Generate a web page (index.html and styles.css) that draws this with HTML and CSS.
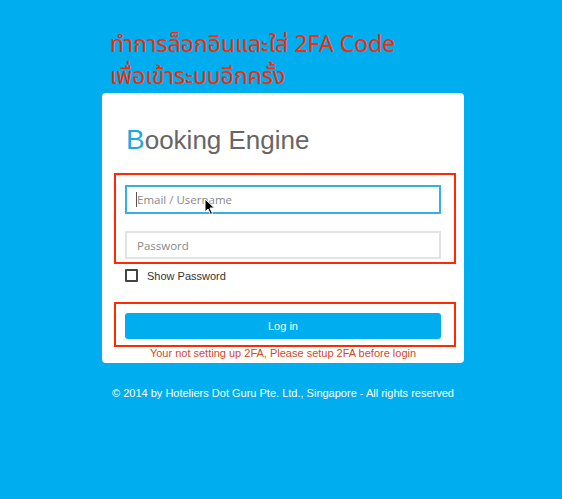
FILE: index.html
```html
<!DOCTYPE html>
<html>
<head>
    <title>Booking Engine - Login</title>
    <link rel="stylesheet" href="styles.css">
</head>
<body>
    <div class="page">
        <h2 class="note">ทำการล็อกอินและใส่ 2FA Code<br>เพื่อเข้าระบบอีกครั้ง</h2>

        <div class="login-card">
            <h1 class="brand"><span class="brand-b">B</span>ooking Engine</h1>

            <div class="field">
                <input type="text" class="input input-focus" placeholder="Email / Username">
                <span class="caret"></span>
                <svg class="pointer" width="12" height="18" viewBox="0 0 12 18">
                    <path d="M1 1 L1 14 L4 11 L6.5 16.5 L8.5 15.5 L6 10 L10.5 10 Z" fill="#000" stroke="#fff" stroke-width="1"/>
                </svg>
            </div>
            <div class="field">
                <input type="password" class="input" placeholder="Password">
            </div>

            <label class="show-pass">
                <span class="check"></span>
                Show Password
            </label>

            <button class="login-button">Log in</button>
            <p class="error">Your not setting up 2FA, Please setup 2FA before login</p>

            <!-- annotation boxes -->
            <div class="mark mark-fields"></div>
            <div class="mark mark-button"></div>
        </div>

        <footer>
            <p>&copy; 2014 by Hoteliers Dot Guru Pte. Ltd., Singapore - All rights reserved</p>
        </footer>
    </div>
</body>
</html>
```

FILE: styles.css
```css
body {
    margin: 0;
    background: #00aeef;
    font-family: "Liberation Sans", Arial, sans-serif;
    min-height: 100vh;
}

.page {
    width: 362px;
    margin: 0 auto;
    padding: 29px 0 0 4px;
}

.note {
    margin: 0 0 0 8px;
    font-family: "Noto Sans Thai", "Noto Sans", "DejaVu Sans", sans-serif;
    font-size: 23px;
    font-weight: normal;
    line-height: 32px;
    color: #ff2a00;
}

.login-card {
    position: relative;
    background: white;
    border-radius: 4px;
    padding: 31px 23px 0 23px;
    height: 239px;
}

.brand {
    margin: 0 0 29px 1px;
    font-size: 26px;
    font-weight: normal;
    line-height: 32px;
    color: #666;
}

.brand-b {
    color: #1ba9e1;
    font-size: 28px;
}

.field {
    position: relative;
    margin-bottom: 17px;
}

.input {
    display: block;
    box-sizing: border-box;
    width: 316px;
    height: 28px;
    padding: 0 10px;
    border: 2px solid #e3e3e3;
    font-family: "Open Sans", sans-serif;
    font-size: 11.5px;
    color: #555;
    outline: none;
}

.input::placeholder {
    color: #8a8a8a;
}

.input-focus {
    height: 29px;
    border-color: #36b0e4;
}

.caret {
    position: absolute;
    left: 11px;
    top: 7px;
    width: 1px;
    height: 15px;
    background: #555;
}

.pointer {
    position: absolute;
    left: 79px;
    top: 13px;
}

.show-pass {
    display: flex;
    align-items: center;
    gap: 9px;
    margin-top: -7px;
    font-size: 11px;
    color: #333;
}

.check {
    box-sizing: border-box;
    width: 13px;
    height: 13px;
    border: 2px solid #444;
    border-radius: 1px;
}

.login-button {
    display: block;
    width: 316px;
    height: 26px;
    margin-top: 31px;
    border: none;
    border-radius: 3px;
    background: #00aeef;
    color: white;
    font-family: "Liberation Sans", Arial, sans-serif;
    font-size: 11px;
    cursor: pointer;
}

.error {
    margin: 8px 0 0 0;
    text-align: center;
    font-size: 11px;
    line-height: 13px;
    color: #d9461f;
}

.mark {
    position: absolute;
    left: 12px;
    width: 342px;
    box-sizing: border-box;
    border: 2px solid #ff2a00;
}

.mark-fields {
    top: 80px;
    height: 91px;
}

.mark-button {
    top: 209px;
    height: 45px;
}

footer {
    text-align: center;
    color: white;
    font-size: 11px;
    margin-top: 24px;
}

footer p {
    margin: 0;
}
```
